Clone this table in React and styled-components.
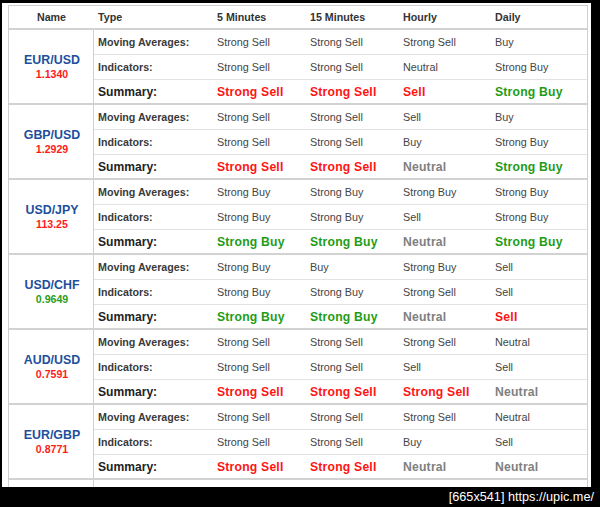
import React from "react";
import styled, { createGlobalStyle } from "styled-components";

const Global = createGlobalStyle`
  html, body { margin: 0; padding: 0; background: #000; }
  body { width: 600px; height: 507px; overflow: hidden; font-family: "Liberation Sans", Arial, sans-serif; }
  * { box-sizing: border-box; }
`;

const Frame = styled.div`
  width: 600px;
  height: 507px;
  background: #000;
  padding: 3px 0 0 2px;
  display: flex;
  flex-direction: column;
`;

const Panel = styled.div`
  width: 589px;
  height: 484px;
  flex: none;
  background: #fff;
  padding: 2px 0 0 6px;
  overflow: hidden;
`;

const Table = styled.div`
  width: 580px;
  border: 1px solid #cfcfcf;
  border-bottom: none;
`;

const COLS = "119px 93px 93px 92px 96px";

const HeaderRow = styled.div`
  display: flex;
  height: 24px;
  border-bottom: 2px solid #d2d2d2;
`;

const HeadName = styled.div`
  width: 85px;
  display: flex;
  align-items: center;
  justify-content: center;
  font-weight: bold;
  font-size: 10.7px;
  color: #333;
`;

const Grid = styled.div`
  display: grid;
  grid-template-columns: ${COLS};
  width: 493px;
  height: ${(p) => p.$h}px;
  border-bottom: ${(p) => (p.$line ? "1px solid #e2e2e2" : "none")};
  align-items: center;
`;

const HeadCell = styled.div`
  padding-left: 4px;
  font-weight: bold;
  font-size: 10.7px;
  color: #333;
  white-space: nowrap;
`;

const Group = styled.div`
  display: flex;
  border-bottom: 2px solid #d2d2d2;
`;

const NameCell = styled.div`
  width: 85px;
  border-right: 1px solid #d0d0d0;
  display: flex;
  flex-direction: column;
  align-items: center;
  justify-content: center;
  padding-left: 2px;
`;

const TailRow = styled.div`
  display: flex;
  height: 12px;
`;

const TailName = styled.div`
  width: 85px;
  border-right: 1px solid #d0d0d0;
`;

const Pair = styled.div`
  font-weight: bold;
  font-size: 12.4px;
  line-height: 14px;
  color: #1d4f9c;
`;

const Price = styled.div`
  font-weight: bold;
  font-size: 10.6px;
  line-height: 14px;
  color: ${(p) => (p.$up ? "#2a9d1c" : "#ff1a1a")};
`;

const Rows = styled.div`
  display: flex;
  flex-direction: column;
`;

const Label = styled.div`
  padding-left: 4px;
  font-weight: bold;
  font-size: ${(p) => (p.$sum ? "12.1px" : "10.7px")};
  color: ${(p) => (p.$sum ? "#222" : "#3a3a3a")};
  white-space: nowrap;
`;

const colorOf = (v) => {
  if (v.includes("Sell")) return "#ff1414";
  if (v.includes("Buy")) return "#1f9c17";
  return "#808080";
};

const Value = styled.div`
  padding-left: 4px;
  white-space: nowrap;
  font-size: ${(p) => (p.$sum ? "12.2px" : "10.8px")};
  font-weight: ${(p) => (p.$sum ? "bold" : "normal")};
  letter-spacing: ${(p) => (p.$sum ? "0.2px" : "0")};
  color: ${(p) => (p.$sum ? colorOf(p.$v) : "#444")};
`;

const Footer = styled.div`
  flex: 1;
  display: flex;
  align-items: center;
  justify-content: flex-end;
  padding-right: 6px;
  padding-bottom: 1px;
  color: #fff;
  font-family: "Liberation Sans", Arial, sans-serif;
  font-size: 12.7px;
  white-space: nowrap;
`;

const SS = "Strong Sell", SB = "Strong Buy", N = "Neutral";

const data = [
  { pair: "EUR/USD", price: "1.1340", up: false,
    ma: [SS, SS, SS, "Buy"], ind: [SS, SS, N, SB], sum: [SS, SS, "Sell", SB] },
  { pair: "GBP/USD", price: "1.2929", up: false,
    ma: [SS, SS, "Sell", "Buy"], ind: [SS, SS, "Buy", SB], sum: [SS, SS, N, SB] },
  { pair: "USD/JPY", price: "113.25", up: false,
    ma: [SB, SB, SB, SB], ind: [SB, SB, "Sell", SB], sum: [SB, SB, N, SB] },
  { pair: "USD/CHF", price: "0.9649", up: true,
    ma: [SB, "Buy", SB, "Sell"], ind: [SB, SB, SS, "Sell"], sum: [SB, SB, N, "Sell"] },
  { pair: "AUD/USD", price: "0.7591", up: false,
    ma: [SS, SS, SS, N], ind: [SS, SS, "Sell", "Sell"], sum: [SS, SS, SS, N] },
  { pair: "EUR/GBP", price: "0.8771", up: false,
    ma: [SS, SS, SS, N], ind: [SS, SS, "Buy", "Sell"], sum: [SS, SS, N, N] },
];

export default function App() {
  return (
    <>
      <Global />
      <Frame>
        <Panel>
          <Table>
            <HeaderRow>
              <HeadName>Name</HeadName>
              <Grid $h={22}>
                <HeadCell>Type</HeadCell>
                <HeadCell>5 Minutes</HeadCell>
                <HeadCell>15 Minutes</HeadCell>
                <HeadCell>Hourly</HeadCell>
                <HeadCell>Daily</HeadCell>
              </Grid>
            </HeaderRow>
            {data.map((d) => (
              <Group key={d.pair}>
                <NameCell>
                  <Pair>{d.pair}</Pair>
                  <Price $up={d.up}>{d.price}</Price>
                </NameCell>
                <Rows>
                  <Grid $h={25} $line>
                    <Label>Moving Averages:</Label>
                    {d.ma.map((v, i) => (
                      <Value key={i} $v={v}>{v}</Value>
                    ))}
                  </Grid>
                  <Grid $h={25} $line>
                    <Label>Indicators:</Label>
                    {d.ind.map((v, i) => (
                      <Value key={i} $v={v}>{v}</Value>
                    ))}
                  </Grid>
                  <Grid $h={23}>
                    <Label $sum>Summary:</Label>
                    {d.sum.map((v, i) => (
                      <Value key={i} $sum $v={v}>{v}</Value>
                    ))}
                  </Grid>
                </Rows>
              </Group>
            ))}
            <TailRow>
              <TailName />
            </TailRow>
          </Table>
        </Panel>
        <Footer>[665x541] https://upic.me/</Footer>
      </Frame>
    </>
  );
}
